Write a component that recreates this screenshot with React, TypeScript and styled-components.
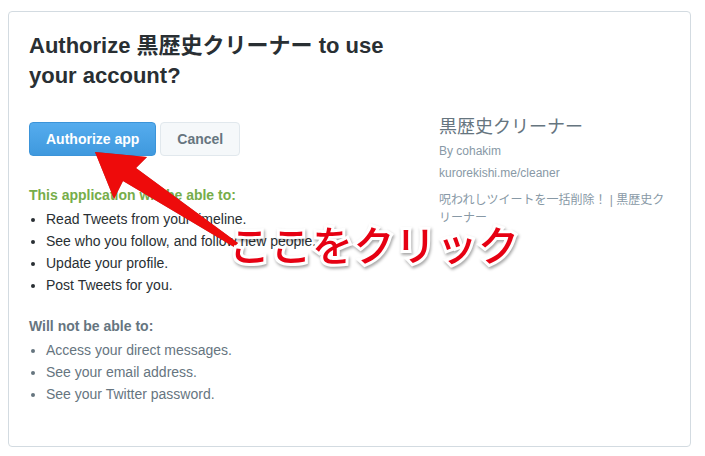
import React from 'react';
import styled, { createGlobalStyle } from 'styled-components';

const GlobalStyle = createGlobalStyle`
  html, body {
    margin: 0;
    background: #fff;
  }
  body {
    font-family: 'Liberation Sans', Arial, 'Noto Sans CJK JP', sans-serif;
    color: #292f33;
  }
`;

const Page = styled.div`
  position: relative;
  padding: 11px 8px;
  width: 705px;
  height: 456px;
  box-sizing: border-box;
`;

const Card = styled.div`
  width: 683px;
  height: 436px;
  box-sizing: border-box;
  border: 1px solid #d3dbe1;
  border-radius: 4px;
  padding: 19px 20px;
  display: grid;
  grid-template-columns: 370px 230px;
  column-gap: 40px;
  align-items: start;
`;

const Main = styled.div`
  display: flex;
  flex-direction: column;
`;

const Title = styled.h2`
  margin: 0;
  font-size: 22px;
  font-weight: bold;
  line-height: 30px;
  color: #292f33;
`;

const Actions = styled.div`
  display: flex;
  gap: 4px;
  margin-top: 31px;
`;

const Button = styled.button<{ $primary?: boolean }>`
  font-family: inherit;
  font-size: 14px;
  font-weight: bold;
  line-height: 16px;
  padding: 8px 16px;
  border-radius: 4px;
  border: 1px solid ${(p) => (p.$primary ? '#3b94d9' : '#e1e8ed')};
  background: ${(p) => (p.$primary ? 'linear-gradient(#55acee, #3f99de)' : '#f5f8fa')};
  color: ${(p) => (p.$primary ? '#fff' : '#66757f')};
  cursor: pointer;
`;

const Heading = styled.h3<{ $tone: 'good' | 'muted' }>`
  margin: ${(p) => (p.$tone === 'good' ? '28px' : '19px')} 0 2px;
  font-size: 14px;
  font-weight: bold;
  line-height: 22px;
  color: ${(p) => (p.$tone === 'good' ? '#76ad4a' : '#66757f')};
`;

const List = styled.ul<{ $muted?: boolean }>`
  margin: 0;
  padding-left: 17px;
  font-size: 14px;
  line-height: 22px;
  color: ${(p) => (p.$muted ? '#66757f' : '#292f33')};
`;

const Side = styled.aside`
  margin-top: 84px;
  color: #8899a6;
  font-size: 12px;
`;

const AppName = styled.div`
  font-size: 18px;
  line-height: 24px;
  color: #66757f;
`;

const Meta = styled.div`
  line-height: 20px;
  margin-top: 2px;
`;

const Description = styled.p`
  margin: 8px 0 0;
  line-height: 18px;
`;

const Arrow = styled.svg`
  position: absolute;
  left: 0;
  top: 0;
  pointer-events: none;
  filter: drop-shadow(0 0 0.5px rgba(120, 0, 0, 0.6));
`;

const Callout = styled.div`
  position: absolute;
  left: 229px;
  top: 222px;
  font-family: 'Noto Sans CJK JP', sans-serif;
  font-size: 41px;
  font-weight: 500;
  line-height: 42px;
  letter-spacing: 0.5px;
  color: #e60012;
  -webkit-text-stroke: 6px #fff;
  paint-order: stroke fill;
  filter: drop-shadow(1px 2px 1.5px rgba(0, 0, 0, 0.35));
  white-space: nowrap;
`;

export default function App() {
  return (
    <Page>
      <GlobalStyle />
      <Card>
        <Main>
          <Title>Authorize 黒歴史クリーナー to use your account?</Title>
          <Actions>
            <Button $primary>Authorize app</Button>
            <Button>Cancel</Button>
          </Actions>
          <Heading $tone="good">This application will be able to:</Heading>
          <List>
            <li>Read Tweets from your timeline.</li>
            <li>See who you follow, and follow new people.</li>
            <li>Update your profile.</li>
            <li>Post Tweets for you.</li>
          </List>
          <Heading $tone="muted">Will not be able to:</Heading>
          <List $muted>
            <li>Access your direct messages.</li>
            <li>See your email address.</li>
            <li>See your Twitter password.</li>
          </List>
        </Main>
        <Side>
          <AppName>黒歴史クリーナー</AppName>
          <Meta>By cohakim</Meta>
          <Meta>kurorekishi.me/cleaner</Meta>
          <Description>呪われしツイートを一括削除！ | 黒歴史クリーナー</Description>
        </Side>
      </Card>
      <Arrow width="705" height="456" viewBox="0 0 705 456">
        <polygon
          points="95,152 147,157 136,168 238,243 234,247 123,181 114,199"
          fill="#ee0b0b"
        />
      </Arrow>
      <Callout>ここをクリック</Callout>
    </Page>
  );
}
